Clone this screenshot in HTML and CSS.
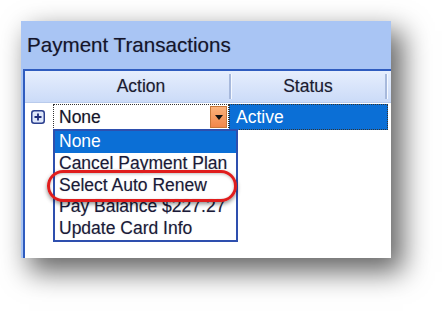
FILE: index.html
```html
<!DOCTYPE html>
<html>
<head>
<meta charset="utf-8">
<link rel="stylesheet" href="styles.css">
</head>
<body>
<div class="panel">
  <div class="panel-title">Payment Transactions</div>
  <div class="grid">
    <div class="grid-head">
      <div class="hcol hcol-exp"></div>
      <div class="hcol hcol-action">Action</div>
      <div class="hcol hcol-status">Status</div>
      <div class="hcol hcol-rest"></div>
    </div>
    <div class="grid-row">
      <div class="exp">
        <svg class="plus" width="14" height="14" viewBox="0 0 14 14">
          <rect x="0.75" y="0.75" width="12.5" height="12.5" rx="2.5" fill="#dfe8fb" stroke="#2b3f8e" stroke-width="1.5"/>
          <path d="M3.5 7h7M7 3.5v7" stroke="#1f2c7a" stroke-width="1.8"/>
        </svg>
      </div>
      <div class="cell-edit">
        <span class="combo-text">None</span>
        <span class="combo-btn"><svg width="8" height="5" viewBox="0 0 8 5"><path d="M0 0h8L4 5z" fill="#111"/></svg></span>
      </div>
      <div class="cell-status">Active</div>
    </div>
  </div>
  <ul class="dropdown">
    <li class="item selected">None</li>
    <li class="item">Cancel Payment Plan</li>
    <li class="item">Select Auto Renew</li>
    <li class="item">Pay Balance $227.27</li>
    <li class="item">Update Card Info</li>
  </ul>
  <div class="highlight"></div>
</div>
</body>
</html>
```

FILE: styles.css
```css
html, body {
  margin: 0;
  padding: 0;
  background: #ffffff;
}
html {
  height: 100%;
}
body {
  min-height: 311px;
  box-sizing: border-box;
  padding: 21px 0 0 21px;
  font-family: "Liberation Sans", Arial, sans-serif;
}
.panel {
  position: relative;
  width: 370px;
  height: 237px;
  background: #a9c5f4;
  box-shadow: 10px 12px 26px 2px rgba(0, 0, 0, 0.6);
  display: flex;
  flex-direction: column;
}
.panel-title {
  height: 48px;
  box-sizing: border-box;
  padding: 11px 0 0 6px;
  font-size: 20.6px;
  color: #15152a;
  line-height: 25px;
  text-shadow: 0 0 1px rgba(20, 20, 50, 0.35);
}
.grid {
  flex: 1;
  margin-left: 2px;
  background: #ffffff;
  border-top: 2px solid #2f5cbf;
  border-left: 2px solid #2f5cbf;
  overflow: hidden;
  display: flex;
  flex-direction: column;
}
.grid-head {
  height: 32px;
  display: flex;
  background: linear-gradient(#e6eefd, #cbdbf8);
  border-bottom: 1px solid #b9cbec;
  box-sizing: border-box;
  color: #1b1b30;
  font-size: 17.5px;
  text-shadow: 0 0 1px rgba(20, 20, 50, 0.3);
}
.hcol {
  display: flex;
  align-items: center;
  justify-content: center;
  box-sizing: border-box;
}
.hcol-exp { width: 28px; }
.hcol-action {
  width: 178px;
}
.hcol-status {
  width: 156px;
}
.hcol-action, .hcol-status {
  border-right: 2px solid #a7b9dc;
  box-shadow: 1px 0 0 #f4f8ff;
  margin: 3px 0 3px;
}
.hcol-rest { flex: 1; }
.grid-row {
  display: flex;
  height: 26px;
  margin-top: 1px;
  font-size: 17.5px;
}
.exp {
  width: 28px;
  display: flex;
  align-items: center;
  justify-content: flex-start;
  padding-left: 6px;
  box-sizing: border-box;
}
.plus { display: block; }
.cell-edit {
  width: 176px;
  box-sizing: border-box;
  border: 1px dotted #333;
  display: flex;
  align-items: center;
  background: #ffffff;
  color: #15152a;
  padding: 1px 1px 1px 5px;
  text-shadow: 0 0 1px rgba(20, 20, 50, 0.3);
}
.combo-text { flex: 1; }
.combo-btn {
  width: 17px;
  align-self: stretch;
  background: linear-gradient(#fbb27a, #f2874a);
  border: 1px solid #c7773a;
  box-sizing: border-box;
  display: flex;
  align-items: center;
  justify-content: center;
}
.combo-btn svg { display: block; }
.cell-status {
  width: 159px;
  box-sizing: border-box;
  border: 1px dotted #333;
  background: #0b6fd6;
  color: #ffffff;
  padding: 0 0 0 6px;
  display: flex;
  align-items: center;
}
.dropdown {
  position: absolute;
  left: 32px;
  top: 108px;
  width: 185px;
  margin: 0;
  padding: 0;
  list-style: none;
  background: #ffffff;
  border: 2px solid #2e4fae;
  box-sizing: border-box;
  font-size: 17.5px;
  color: #1a1a38;
  text-shadow: 0 0 1px rgba(20, 20, 50, 0.3);
}
.item {
  height: 21.8px;
  line-height: 21px;
  padding-left: 4px;
  white-space: nowrap;
  overflow: hidden;
}
.item.selected {
  background: #0b6fd6;
  color: #ffffff;
  text-shadow: none;
}
.highlight {
  position: absolute;
  left: 26px;
  top: 149px;
  width: 190px;
  height: 32px;
  box-sizing: border-box;
  border: 3px solid #e01d1d;
  border-radius: 16px;
  box-shadow: 0 2px 4px rgba(0, 0, 0, 0.45), inset 0 1px 3px rgba(0, 0, 0, 0.25);
}
```
